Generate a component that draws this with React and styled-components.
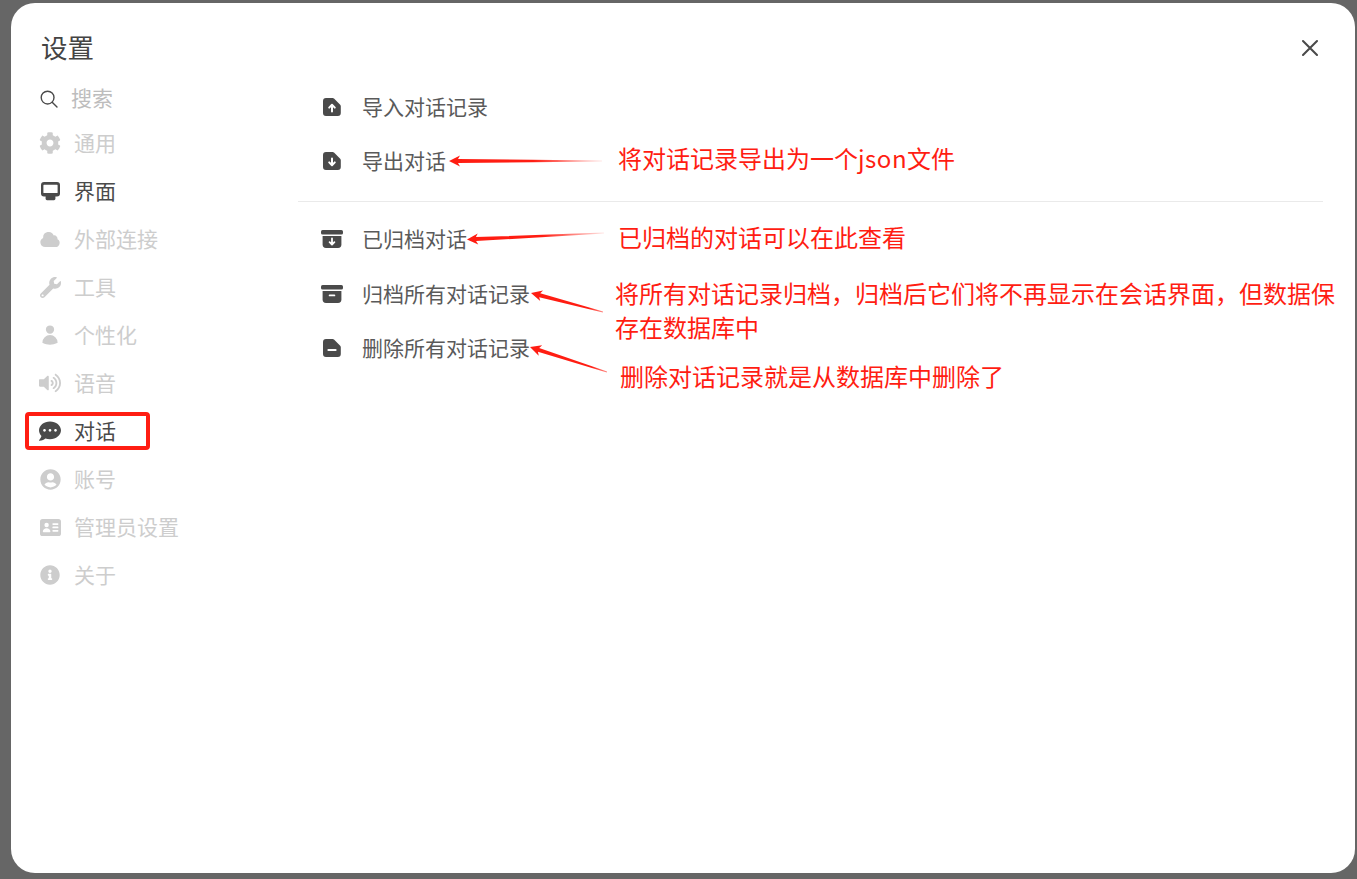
import styled, { createGlobalStyle } from 'styled-components';
import {
	FaCog,
	FaCommentDots,
	FaInfoCircle,
	FaUserCircle,
	FaVolumeUp,
	FaWrench,
} from 'react-icons/fa';
import { HiCloud, HiUser } from 'react-icons/hi2';

const FONT = '"Noto Sans CJK SC", "Noto Sans", sans-serif';
const DARK = '#4a4a4a';
const MUTED = '#cdcdcd';
const RED = '#ff1d12';

const GlobalStyle = createGlobalStyle`
	html, body {
		margin: 0;
		padding: 0;
		background: #666666;
	}
	body {
		font-family: ${FONT};
	}
`;

const Page = styled.div`
	box-sizing: border-box;
	width: 1357px;
	height: 879px;
	padding: 3px 2px 6px 11px;
	overflow: hidden;
`;

const Modal = styled.div`
	position: relative;
	display: flex;
	flex-direction: column;
	width: 100%;
	height: 100%;
	background: #ffffff;
	border-radius: 24px;
	overflow: hidden;
`;

const Header = styled.header`
	box-sizing: border-box;
	display: flex;
	justify-content: space-between;
	align-items: center;
	height: 75px;
	padding: 15px 36px 0 30px;
`;

const Title = styled.h1`
	margin: 0;
	padding-bottom: 2px;
	font-size: 26.5px;
	line-height: 40px;
	font-weight: 400;
	color: #444444;
`;

const CloseButton = styled.button`
	display: flex;
	padding: 0;
	border: none;
	background: none;
	color: ${DARK};
`;

const Body = styled.div`
	display: flex;
	flex: 1;
`;

const Sidebar = styled.nav`
	box-sizing: border-box;
	display: flex;
	flex-direction: column;
	width: 287px;
	padding-left: 28px;
`;

const SearchRow = styled.div`
	display: flex;
	align-items: center;
	gap: 13px;
	height: 41px;
	padding-left: 1px;
	color: ${DARK};
`;

const SearchLabel = styled.span`
	font-size: 21px;
	line-height: 30px;
	padding-bottom: 4px;
	color: #bdbdbd;
`;

const NavItem = styled.div`
	display: flex;
	align-items: center;
	gap: 13px;
	height: 48px;
	font-size: 21px;
	color: ${(p) => (p.$active ? DARK : MUTED)};
`;

const NavIcon = styled.span`
	display: flex;
	justify-content: center;
	align-items: center;
	width: 22px;
	height: 22px;
	flex: none;
`;

const Label = styled.span`
	line-height: 30px;
	padding-bottom: 2px;
`;

const Content = styled.main`
	flex: 1;
	padding-right: 32px;
`;

const Section = styled.section`
	display: flex;
	flex-direction: column;
	padding-top: ${(p) => p.$top}px;
	padding-bottom: ${(p) => p.$bottom}px;
	border-bottom: ${(p) => (p.$divider ? '1px solid #eaeaea' : 'none')};
`;

const Row = styled.div`
	display: flex;
	align-items: center;
	gap: 19px;
	height: ${(p) => p.$height}px;
	padding-left: 23px;
	font-size: 21px;
	color: #5a5a5a;
`;

const RowIcon = styled.span`
	display: flex;
	justify-content: center;
	align-items: center;
	width: 22px;
	height: 22px;
	flex: none;
	color: ${DARK};
`;

const Note = styled.div`
	position: absolute;
	left: ${(p) => p.$x}px;
	top: ${(p) => p.$y}px;
	width: ${(p) => p.$w || 760}px;
	font-size: 24px;
	line-height: 34px;
	color: ${RED};
`;

const Latin = styled.span`
	letter-spacing: 0.5px;
`;

const HighlightBox = styled.div`
	position: absolute;
	left: 14px;
	top: 409px;
	box-sizing: border-box;
	width: 125px;
	height: 38px;
	border: 4px solid ${RED};
	border-radius: 4px;
`;

const ArrowLayer = styled.svg`
	position: absolute;
	left: 0;
	top: 0;
	width: 100%;
	height: 100%;
	pointer-events: none;
`;

const SearchIcon = () => (
	<svg width="18" height="18" viewBox="0 0 18 18" fill="none" stroke="currentColor" strokeWidth="1.4">
		<circle cx="7.6" cy="7.6" r="6.4" />
		<path d="M12.2 12.2 17 17" strokeLinecap="round" />
	</svg>
);

const DesktopIcon = () => (
	<svg width="19" height="19" viewBox="0 0 19 19" fill="currentColor">
		<path
			fillRule="evenodd"
			d="M3 0h13a3 3 0 0 1 3 3v8.4a3 3 0 0 1-3 3H3a3 3 0 0 1-3-3V3a3 3 0 0 1 3-3Zm0 2.8a.6.6 0 0 0-.6.6v7a.6.6 0 0 0 .6.6h13a.6.6 0 0 0 .6-.6v-7a.6.6 0 0 0-.6-.6H3Z"
		/>
		<path d="M4.6 14h9.8v2.8a1.4 1.4 0 0 1-1.4 1.4H6a1.4 1.4 0 0 1-1.4-1.4V14Z" />
	</svg>
);

const IdCardIcon = () => (
	<svg width="21" height="17" viewBox="0 0 21 17">
		<rect width="21" height="17" rx="2.6" fill="currentColor" />
		<g fill="#ffffff">
			<circle cx="6.6" cy="6" r="2.2" />
			<path d="M2.8 12.6c0-2 1.7-3.3 3.8-3.3s3.8 1.3 3.8 3.3c0 .4-.3.6-.7.6H3.5c-.4 0-.7-.2-.7-.6Z" />
			<rect x="12.4" y="4.2" width="6" height="1.7" rx=".6" />
			<rect x="12.4" y="7.6" width="6" height="1.7" rx=".6" />
			<rect x="12.4" y="11" width="6" height="1.7" rx=".6" />
		</g>
	</svg>
);

const DOC_PATH = 'M3 0h6.6a2 2 0 0 1 1.4.6l6.2 6.2a2 2 0 0 1 .6 1.4V15a3 3 0 0 1-3 3H3a3 3 0 0 1-3-3V3a3 3 0 0 1 3-3Z';

const DocIcon = ({ children }) => (
	<svg width="18" height="18" viewBox="0 0 18 18">
		<path d={DOC_PATH} fill="currentColor" />
		<g fill="none" stroke="#ffffff" strokeWidth="2" strokeLinecap="round" strokeLinejoin="round">
			{children}
		</g>
	</svg>
);

const ArchiveIcon = ({ children }) => (
	<svg width="22" height="18" viewBox="0 0 22 18">
		<rect x="0" y="0" width="22" height="4.6" rx="1.6" fill="currentColor" />
		<path d="M1.6 6h18.8v8.6a3.4 3.4 0 0 1-3.4 3.4H5a3.4 3.4 0 0 1-3.4-3.4V6Z" fill="currentColor" />
		<g fill="none" stroke="#ffffff" strokeWidth="1.8" strokeLinecap="round" strokeLinejoin="round">
			{children}
		</g>
	</svg>
);

const navItems = [
	{ label: '通用', icon: <FaCog size={22} /> },
	{ label: '界面', icon: <DesktopIcon />, active: true },
	{ label: '外部连接', icon: <HiCloud size={25} /> },
	{ label: '工具', icon: <FaWrench size={21} /> },
	{ label: '个性化', icon: <HiUser size={24} /> },
	{ label: '语音', icon: <FaVolumeUp size={22} /> },
	{ label: '对话', icon: <FaCommentDots size={22} />, active: true },
	{ label: '账号', icon: <FaUserCircle size={21} /> },
	{ label: '管理员设置', icon: <IdCardIcon /> },
	{ label: '关于', icon: <FaInfoCircle size={20} /> },
];

// tapered red arrows drawn by hand over the screenshot, coordinates are relative to the modal
const arrows = [
	{ tip: [438, 158], tail: [591, 158], fade: true },
	{ tip: [456, 236.5], tail: [593, 230], fade: true },
	{ tip: [520, 290], tail: [592, 309] },
	{ tip: [519, 344], tail: [596, 369] },
];

const arrowPoints = ({ tip, tail }) => {
	const dx = tail[0] - tip[0];
	const dy = tail[1] - tip[1];
	const len = Math.hypot(dx, dy);
	const ux = dx / len;
	const uy = dy / len;
	const at = (along, side) => `${tip[0] + ux * along - uy * side},${tip[1] + uy * along + ux * side}`;
	return [
		at(0, 0),
		at(11, 5.5),
		at(9, 2),
		at(len, 0.4),
		at(len, -0.4),
		at(9, -2),
		at(11, -5.5),
	].join(' ');
};

const Arrows = () => (
	<ArrowLayer>
		<defs>
			{arrows.map((a, i) => (
				<linearGradient
					key={i}
					id={`arrow-${i}`}
					gradientUnits="userSpaceOnUse"
					x1={a.tip[0]}
					y1={a.tip[1]}
					x2={a.tail[0]}
					y2={a.tail[1]}>
					<stop offset="0" stopColor={RED} />
					<stop offset={a.fade ? '0.55' : '0.8'} stopColor={RED} />
					<stop offset="1" stopColor={RED} stopOpacity={a.fade ? '0.1' : '0.5'} />
				</linearGradient>
			))}
		</defs>
		{arrows.map((a, i) => (
			<polygon key={i} points={arrowPoints(a)} fill={`url(#arrow-${i})`} />
		))}
	</ArrowLayer>
);

export default function App() {
	return (
		<>
			<GlobalStyle />
			<Page>
				<Modal>
					<Header>
						<Title>设置</Title>
						<CloseButton>
							<svg width="18" height="18" viewBox="0 0 18 18" fill="none" stroke="currentColor" strokeWidth="2.1" strokeLinecap="round">
								<path d="M2 2 16 16M16 2 2 16" />
							</svg>
						</CloseButton>
					</Header>
					<Body>
						<Sidebar>
							<SearchRow>
								<SearchIcon />
								<SearchLabel>搜索</SearchLabel>
							</SearchRow>
							{navItems.map((item) => (
								<NavItem key={item.label} $active={item.active}>
									<NavIcon>{item.icon}</NavIcon>
									<Label>{item.label}</Label>
								</NavItem>
							))}
						</Sidebar>
						<Content>
							<Section $top={2} $bottom={14} $divider>
								<Row $height={54}>
									<RowIcon>
										<DocIcon>
											<path d="M9 13.5V7M6.2 9.6 9 6.8l2.8 2.8" />
										</DocIcon>
									</RowIcon>
									<Label>导入对话记录</Label>
								</Row>
								<Row $height={53}>
									<RowIcon>
										<DocIcon>
											<path d="M9 6.5V13M6.2 10.4 9 13.2l2.8-2.8" />
										</DocIcon>
									</RowIcon>
									<Label>导出对话</Label>
								</Row>
							</Section>
							<Section $top={9}>
								<Row $height={56}>
									<RowIcon>
										<ArchiveIcon>
											<path d="M11 8.4v6M8.6 12.2l2.4 2.4 2.4-2.4" />
										</ArchiveIcon>
									</RowIcon>
									<Label>已归档对话</Label>
								</Row>
								<Row $height={54}>
									<RowIcon>
										<ArchiveIcon>
											<path d="M8.6 10.4h4.8" />
										</ArchiveIcon>
									</RowIcon>
									<Label>归档所有对话记录</Label>
								</Row>
								<Row $height={54}>
									<RowIcon>
										<DocIcon>
											<path d="M5.4 11h7.2" />
										</DocIcon>
									</RowIcon>
									<Label>删除所有对话记录</Label>
								</Row>
							</Section>
						</Content>
					</Body>
					<HighlightBox />
					<Arrows />
					<Note $x={607} $y={138}>将对话记录导出为一个<Latin>json</Latin>文件</Note>
					<Note $x={607} $y={217}>已归档的对话可以在此查看</Note>
					<Note $x={604} $y={273} $w={725}>将所有对话记录归档，归档后它们将不再显示在会话界面，但数据保存在数据库中</Note>
					<Note $x={609} $y={356}>删除对话记录就是从数据库中删除了</Note>
				</Modal>
			</Page>
		</>
	);
}
